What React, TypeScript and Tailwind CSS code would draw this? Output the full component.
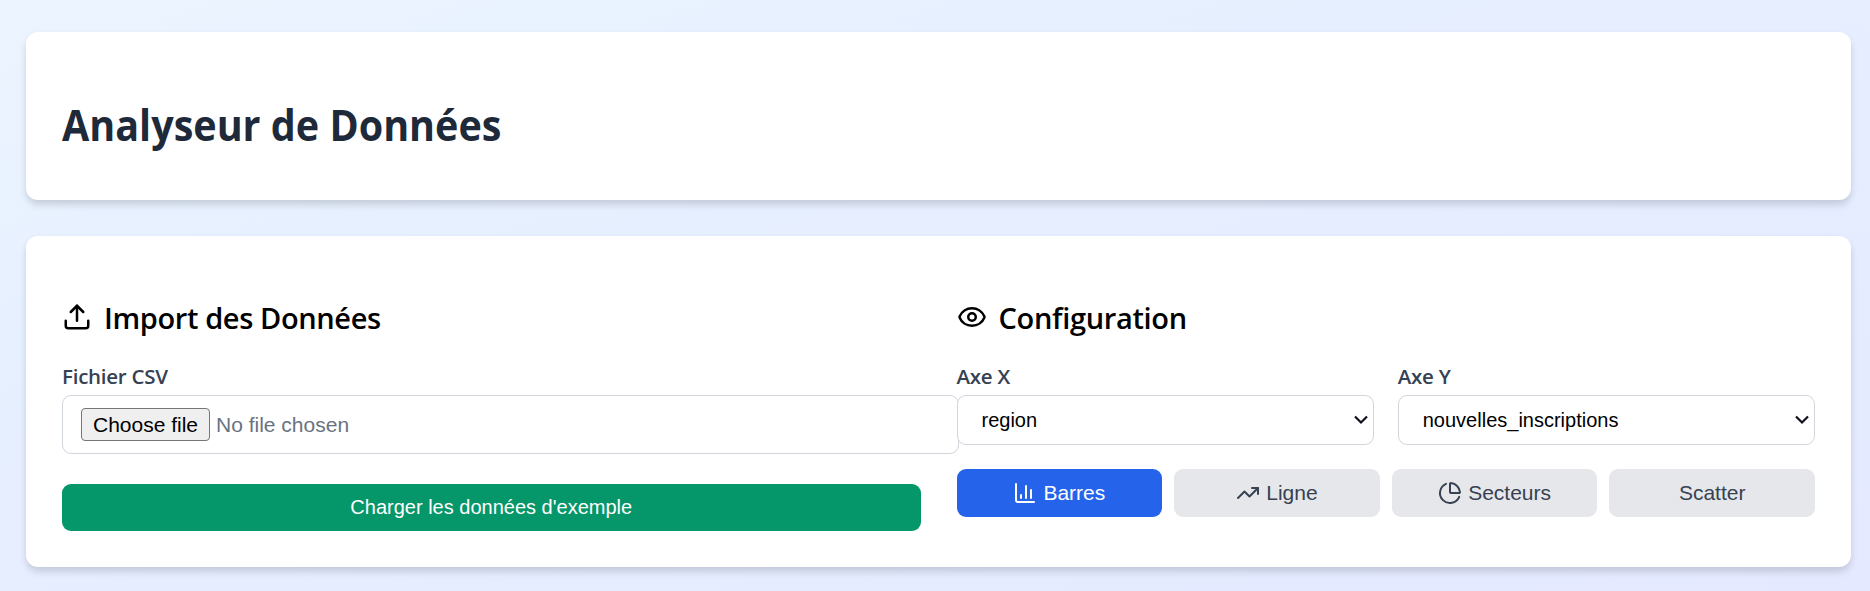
import { ChartColumn, ChartPie, Eye, TrendingUp, Upload } from "lucide-react";
import { useState, type ReactNode } from "react";

const columns = ["region", "nouvelles_inscriptions"];

function AxisSelect({ label, initial }: { label: string; initial: string }) {
  return (
    <label className="flex flex-col">
      <span className="h-[30px] text-[20.5px] leading-[28px] font-semibold tracking-[-0.25px] text-gray-700">{label}</span>
      <span className="relative mt-[3px] block">
        <select
          defaultValue={initial}
          className="block h-[50px] w-full appearance-none rounded-[9px] border border-gray-300 bg-white pl-6 font-['Liberation_Sans',sans-serif] text-[20px] text-black"
        >
          {columns.map((c) => (
            <option key={c}>{c}</option>
          ))}
        </select>
        <svg className="pointer-events-none absolute top-[20px] right-[6px]" width="14" height="10" viewBox="0 0 14 10" fill="none" stroke="#101020" strokeWidth="2.2">
          <path d="M1 1.5 7 7.5 13 1.5" />
        </svg>
      </span>
    </label>
  );
}

function ChartButton({ active, onClick, children }: { active: boolean; onClick: () => void; children: ReactNode }) {
  return (
    <button
      onClick={onClick}
      className={`flex h-12 items-center justify-center gap-[6px] rounded-[9px] font-['Liberation_Sans',sans-serif] text-[21px] leading-6 ${
        active ? "bg-[#2563eb] text-white" : "bg-[#e5e7eb] text-[#374151]"
      }`}
    >
      {children}
    </button>
  );
}

export default function App() {
  const [type, setType] = useState("bar");
  const card = "rounded-xl bg-white px-9 shadow-[0_6px_9px_-1px_rgba(0,0,0,0.1),0_3px_9px_-1px_rgba(0,0,0,0.08)]";
  return (
    <div className="flex h-[591px] flex-col gap-9 overflow-hidden bg-linear-to-br from-[#ecf4ff] via-[#e7f0ff] via-30% to-[#e4e9ff] pt-8 pr-[19px] pl-[26px] font-['Open_Sans','Noto_Sans',sans-serif]">
      <header className={`${card} flex h-[168px] shrink-0 items-center pt-[18px]`}>
        <h1 className="origin-left scale-x-[0.919] text-[43px] leading-[54px] font-bold text-gray-800">Analyseur de Données</h1>
      </header>

      <main className={`${card} grid h-[331px] shrink-0 grid-cols-2 gap-9 pt-[61px]`}>
        <section className="flex flex-col">
          <h2 className="flex h-[42px] items-center gap-3 text-[29px] leading-[42px] font-semibold tracking-[-0.38px] text-black">
            <Upload size={30} className="-mt-[3px]" />
            <span>Import des Données</span>
          </h2>
          <div className="mt-[23px] h-[30px] text-[20.5px] leading-[28px] font-semibold tracking-[-0.25px] text-gray-700">Fichier CSV</div>
          <div className="mt-[3px] -mr-[38px] flex h-[59px] shrink-0 items-center gap-[6px] rounded-[9px] border border-gray-300 pl-[18px] font-['Liberation_Sans',sans-serif] text-[21px]">
            <button className="h-[33px] w-[129px] rounded-[4px] border border-[#767676] bg-[#efefef] leading-[30px] text-black">Choose file</button>
            <span className="text-gray-500">No file chosen</span>
          </div>
          <button className="mt-[30px] h-[47px] shrink-0 rounded-[9px] bg-[#059669] pb-[2px] font-['Liberation_Sans',sans-serif] text-[20px] text-white">
            Charger les données d'exemple
          </button>
        </section>

        <section className="flex flex-col">
          <h2 className="flex h-[42px] items-center gap-3 text-[29px] leading-[42px] font-semibold tracking-[-0.33px] text-black">
            <Eye size={30} className="-mt-[3px]" />
            <span>Configuration</span>
          </h2>
          <div className="relative mt-[23px] grid grid-cols-2 gap-6">
            <AxisSelect label="Axe X" initial="region" />
            <AxisSelect label="Axe Y" initial="nouvelles_inscriptions" />
          </div>
          <div className="mt-6 grid grid-cols-4 gap-3">
            <ChartButton active={type === "bar"} onClick={() => setType("bar")}>
              <ChartColumn size={24} />
              Barres
            </ChartButton>
            <ChartButton active={type === "line"} onClick={() => setType("line")}>
              <TrendingUp size={24} />
              Ligne
            </ChartButton>
            <ChartButton active={type === "pie"} onClick={() => setType("pie")}>
              <ChartPie size={24} />
              Secteurs
            </ChartButton>
            <ChartButton active={type === "scatter"} onClick={() => setType("scatter")}>
              Scatter
            </ChartButton>
          </div>
        </section>
      </main>
    </div>
  );
}
